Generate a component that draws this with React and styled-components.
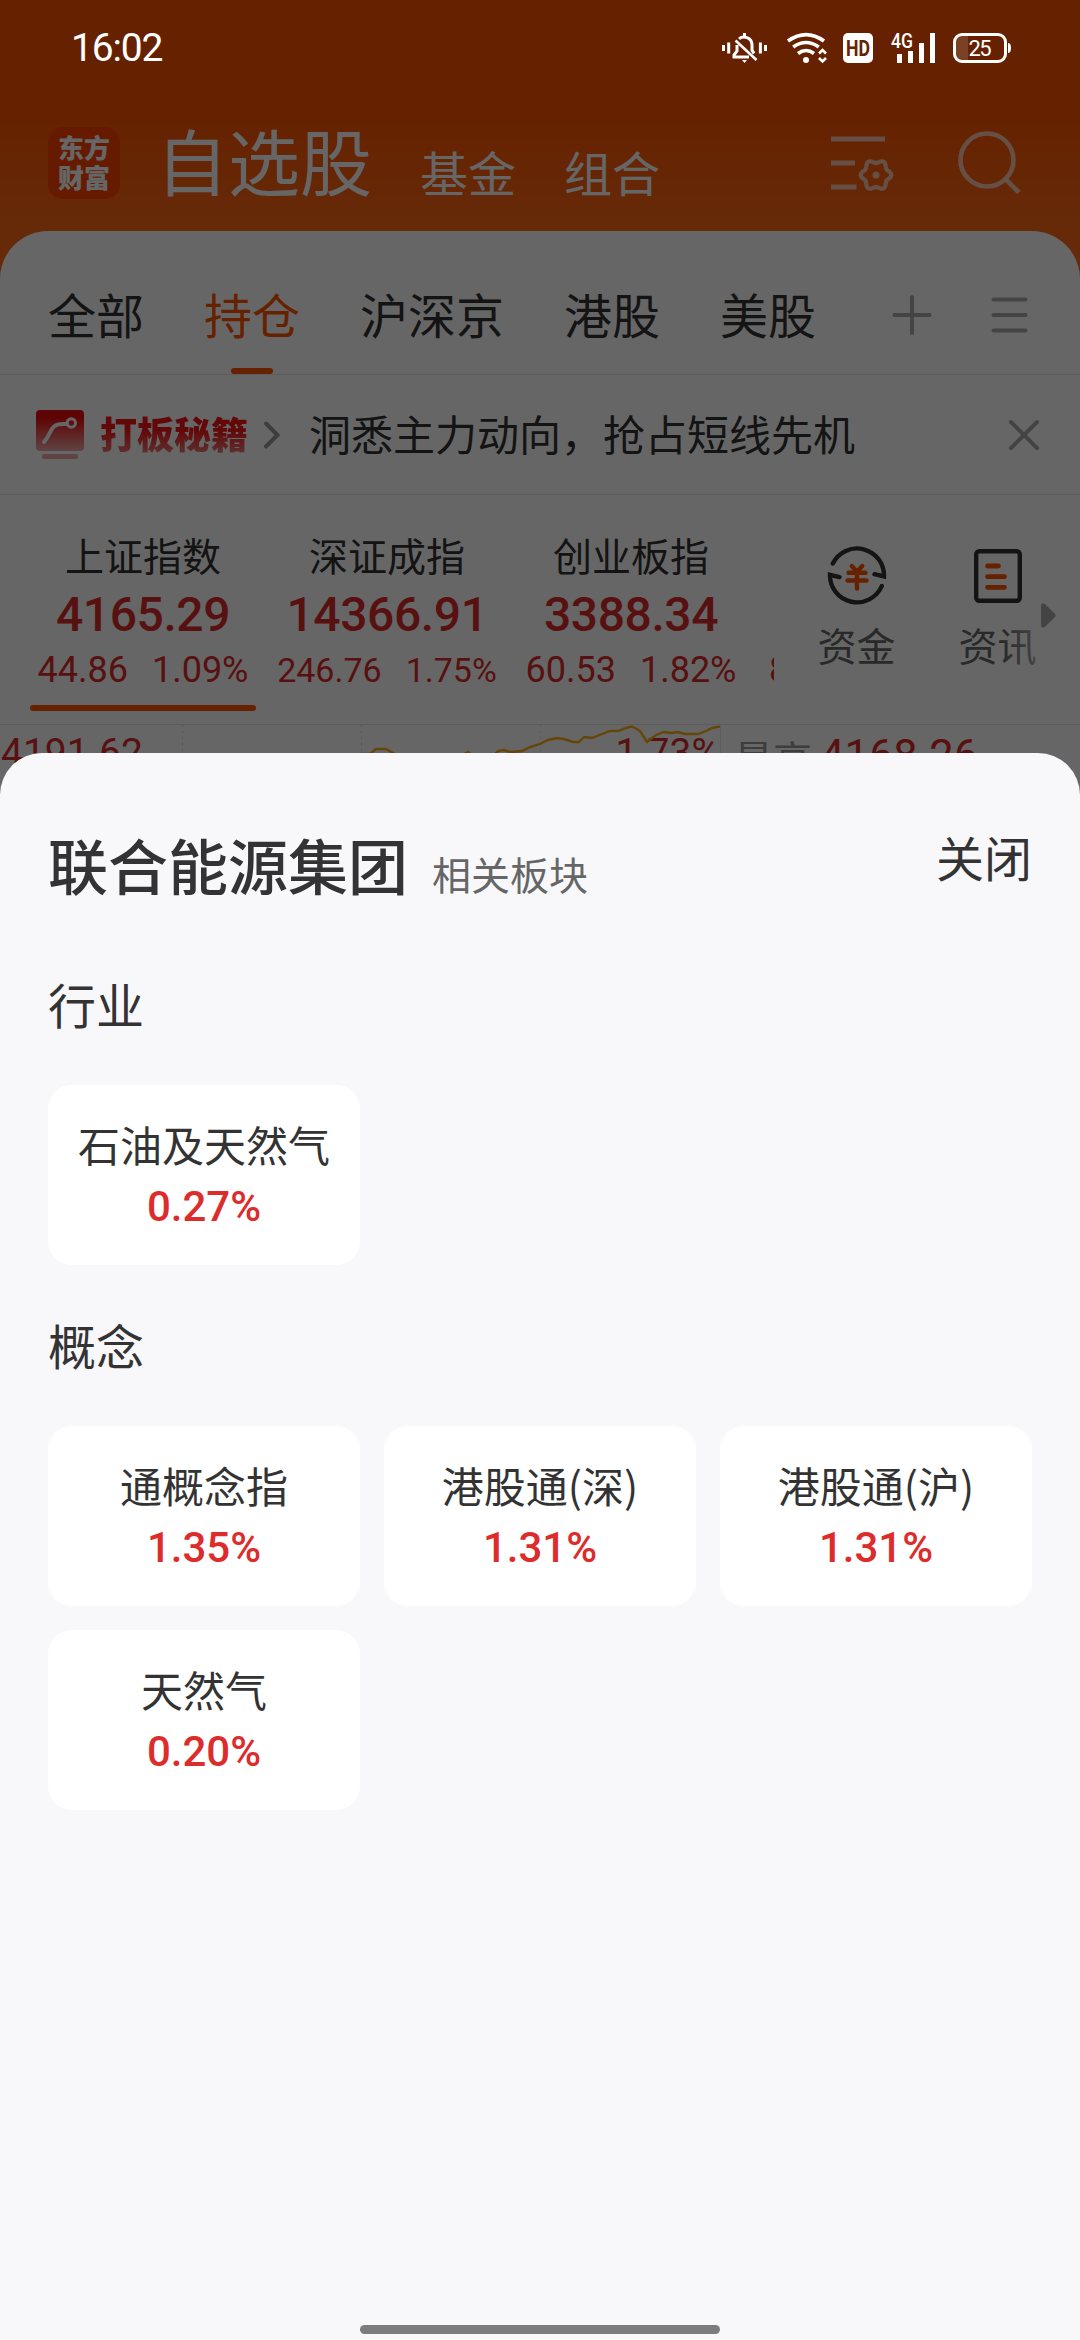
import React from 'react';
import styled, { createGlobalStyle } from 'styled-components';

const GlobalStyle = createGlobalStyle`
  :root {
    --font-cjk: 'Noto Sans CJK SC', 'Noto Sans', sans-serif;
    --font-num: Roboto, 'Liberation Sans', sans-serif;
    --orange: #ff5500;
    --red: #dd2c2c;
    --ink: #333;
    --muted: #666;
    --line: #e8e8e8;
  }

  * {
    box-sizing: border-box;
  }

  body {
    margin: 0;
    font-family: var(--font-cjk);
    color: var(--ink);
  }

  svg {
    display: block;
    flex: none;
  }
`;

const StyledScreen = styled.main`
  position: relative;
  width: 1080px;
  height: 2340px;
  overflow: hidden;
  background-color: #ff6a18;
`;

const StyledStatusBar = styled.div`
  position: absolute;
  top: 0;
  left: 0;
  z-index: 3;
  display: flex;
  align-items: center;
  width: 100%;
  height: 96px;
  padding: 0 69px 0 71px;
  color: #fff;

  .time {
    margin-right: auto;
    font-family: var(--font-num);
    font-size: 39px;
    letter-spacing: -1.2px;
    line-height: 48px;
  }

  .wifi {
    margin-left: 20px;
  }

  .hd {
    margin-left: 16px;
  }

  .signal {
    margin-left: 18px;
  }

  .battery {
    margin-left: 17px;
  }

  svg {
    overflow: visible;
  }

  text {
    font-family: var(--font-num);
  }
`;

const StyledHeader = styled.header`
  display: flex;
  align-items: flex-end;
  height: 231px;
  padding: 0 57px 36px 48px;
  background: linear-gradient(#ff5500 50%, #ff6a18);
  color: #fff;

  .filter {
    margin: 0 57px -4px auto;
  }

  .search {
    margin-bottom: -2px;
  }
`;

const StyledLogo = styled.div`
  width: 72px;
  height: 72px;
  margin: 0 36px -4px 0;
  padding-top: 5px;
  border-radius: 15px;
  background-color: #ff4300;
  font-size: 26px;
  font-weight: 900;
  line-height: 30px;
  text-align: center;
`;

const StyledHeading = styled.span`
  margin-right: 48px;
  font-size: ${props => (props.$active ? 72 : 48)}px;
  line-height: 1;
  white-space: nowrap;
`;

const StyledPanel = styled.section`
  height: 600px;
  border-radius: 48px 48px 0 0;
  background-color: #fff;
`;

const StyledTabs = styled.nav`
  display: flex;
  align-items: center;
  gap: 60px;
  height: 144px;
  padding: 0 52px 0 48px;
  border-bottom: 1px solid var(--line);

  .plus {
    margin: 24px 0 0 15px;
  }

  .menu {
    margin: 24px 0 0 -3px;
  }
`;

const StyledTab = styled.span`
  display: flex;
  flex-direction: column;
  align-items: center;
  height: 143px;
  padding-top: 58px;
  font-size: 48px;
  line-height: 48px;
  white-space: nowrap;
  color: ${props => (props.$active ? 'var(--orange)' : 'var(--ink)')};

  &::after {
    content: '';
    width: 42px;
    height: 6px;
    margin-top: 31px;
    border-radius: 3px;
    background-color: ${props => (props.$active ? 'var(--orange)' : 'transparent')};
  }
`;

const StyledBanner = styled.div`
  display: flex;
  align-items: center;
  height: 120px;
  padding: 0 40px 0 36px;
  border-bottom: 1px solid var(--line);

  .badge {
    margin: -3px 15px 0 16px;
    background: linear-gradient(#f81414 45%, #e88080 92%);
    background-clip: text;
    color: transparent;
    font-size: 37px;
    font-weight: 900;
    line-height: 54px;
  }

  .slogan {
    margin: -4px auto 0 28px;
    font-size: 42px;
    line-height: 54px;
  }
`;

const StyledIndexBar = styled.div`
  display: flex;
  height: 230px;
  border-bottom: 1px solid var(--line);
`;

const StyledIndexList = styled.div`
  display: flex;
  flex: none;
  width: 774px;
  padding-left: 21px;
  overflow: hidden;
`;

const StyledIndex = styled.div`
  display: flex;
  flex: none;
  flex-direction: column;
  align-items: center;
  width: 244px;
  padding-top: 35px;

  .name {
    font-size: 39px;
    line-height: 48px;
  }

  .price {
    margin: 13px 0 11px;
    color: var(--red);
    font-family: var(--font-num);
    font-size: 48px;
    font-weight: 500;
    letter-spacing: -0.4px;
    line-height: 48px;
  }

  .change {
    display: flex;
    gap: 24px;
    color: var(--red);
    font-family: var(--font-num);
    font-size: ${props => (props.$compact ? 34 : 36)}px;
    line-height: 40px;
  }

  &::after {
    content: '';
    width: 226px;
    height: 6px;
    margin-top: 15px;
    border-radius: 3px;
    background-color: ${props => (props.$active ? 'var(--orange)' : 'transparent')};
  }
`;

const StyledNextIndex = styled.div`
  flex: none;
  padding: 155px 0 0 16px;
  color: var(--red);
  font-family: var(--font-num);
  font-size: 36px;
  line-height: 40px;
`;

const StyledShortcuts = styled.div`
  position: relative;
  display: flex;
  padding-left: 12px;

  /* fades the last shortcut out below the scroll arrow */
  &::after {
    content: '';
    position: absolute;
    top: 120px;
    left: 228px;
    width: 45px;
    height: 60px;
    background: linear-gradient(90deg, rgba(255, 255, 255, 0), rgba(255, 255, 255, 0.6));
  }

  .arrow {
    position: absolute;
    top: 108px;
    left: 267px;
    z-index: 1;
  }
`;

const StyledShortcut = styled.div`
  display: flex;
  flex-direction: column;
  align-items: center;
  width: 141px;
  padding-top: 50px;
  color: var(--muted);
  font-size: 39px;
  line-height: 40px;

  svg {
    margin-bottom: 17px;
  }
`;

const StyledQuote = styled.div`
  display: flex;
  height: 60px;
  overflow: hidden;
`;

const StyledChart = styled.div`
  position: relative;
  display: flex;
  justify-content: space-between;
  width: 721px;
  padding: 8px 0 0 1px;
  border-right: 1px solid var(--line);
  color: var(--red);
  font-family: var(--font-num);
  font-size: 39px;
  line-height: 40px;

  svg {
    position: absolute;
    top: 0;
    left: 0;
  }
`;

const StyledHigh = styled.div`
  display: flex;
  gap: 8px;
  padding: 10px 0 0 13px;
  font-size: 39px;
  line-height: 44px;
  color: #999;

  b {
    color: var(--red);
    font-family: var(--font-num);
    font-size: 43.5px;
    font-weight: 400;
  }
`;

const StyledScrim = styled.div`
  position: absolute;
  inset: 0;
  z-index: 1;
  background-color: rgba(0, 0, 0, 0.6);
`;

const StyledSheet = styled.section`
  position: absolute;
  top: 753px;
  right: 0;
  bottom: 0;
  left: 0;
  z-index: 2;
  display: flex;
  flex-direction: column;
  padding: 75px 48px 6px;
  border-radius: 42px 42px 0 0;
  background-color: #f8f8fb;
`;

const StyledSheetHeader = styled.div`
  display: flex;
  align-items: baseline;
  height: 72px;
  margin-bottom: 73px;

  h2 {
    margin: 0 24px 0 0;
    font-size: 60px;
    font-weight: 500;
    line-height: 72px;
  }

  .subtitle {
    color: var(--muted);
    font-size: 39px;
  }

  button {
    align-self: flex-start;
    margin: 4px 0 0 auto;
    padding: 0;
    border: 0;
    background: none;
    color: inherit;
    font: inherit;
    font-size: 48px;
    line-height: 48px;
  }
`;

const StyledSection = styled.div`
  margin-bottom: 49px;

  h3 {
    margin: 0 0 52px;
    font-size: 48px;
    font-weight: 400;
    line-height: 60px;
  }
`;

const StyledGrid = styled.div`
  display: grid;
  grid-template-columns: repeat(3, 312px);
  gap: 24px;
`;

const StyledCard = styled.div`
  display: flex;
  flex-direction: column;
  align-items: center;
  height: 180px;
  padding-top: 31px;
  border-radius: 24px;
  background-color: #fff;

  .name {
    font-size: 42px;
    line-height: 56px;
    white-space: nowrap;
  }

  .change {
    margin-top: 10px;
    color: var(--red);
    font-family: var(--font-num);
    font-size: 42px;
    font-weight: 500;
    line-height: 50px;
  }
`;

const StyledHomeBar = styled.div`
  width: 360px;
  height: 9px;
  margin: auto auto 0;
  border-radius: 5px;
  background-color: #7c7c7c;
`;

const tabs = ['全部', '持仓', '沪深京', '港股', '美股'];

const indices = [
  { name: '上证指数', price: '4165.29', change: '44.86', percent: '1.09%' },
  { name: '深证成指', price: '14366.91', change: '246.76', percent: '1.75%' },
  { name: '创业板指', price: '3388.34', change: '60.53', percent: '1.82%' },
];

const sections = [
  { title: '行业', boards: [{ name: '石油及天然气', change: '0.27%' }] },
  {
    title: '概念',
    boards: [
      { name: '通概念指', change: '1.35%' },
      { name: '港股通(深)', change: '1.31%' },
      { name: '港股通(沪)', change: '1.31%' },
      { name: '天然气', change: '0.20%' },
    ],
  },
];

// six-lobed outline of the settings gear
const gearPoints = Array.from({ length: 72 }, (_, i) => {
  const angle = (i * Math.PI) / 36;
  const r = 13.6 + 1.7 * Math.cos(6 * angle);
  return `${(48 + r * Math.cos(angle)).toFixed(2)},${(44 + r * Math.sin(angle)).toFixed(2)}`;
}).join(' ');

const StatusBar = () => (
  <StyledStatusBar>
    <span className="time">16:02</span>
    <svg width="45" height="30" fill="none" stroke="currentColor" strokeWidth="3">
      <path d="M1.5 12v6M6.7 9.5v11M38.4 9.5v11M43.5 12v6" />
      <path d="M22.5 0v4M17 5.8c4-3.4 13-2 13 6.2v5l2 3.5M15 12v6l-3 4v2h15" />
      <path d="M13.5 7.5L34.5 27" strokeWidth="2.6" />
      <path d="M20 27h5l-2.5 3z" fill="currentColor" stroke="none" />
    </svg>
    <svg className="wifi" width="40" height="30" fill="none" stroke="currentColor" strokeWidth="3.6">
      <path d="M1 8Q19-4.8 37 8M6.2 14Q19 5 31.8 14M11 20.5Q19 14.5 27 20.5" />
      <circle cx="19" cy="27" r="3" fill="currentColor" stroke="none" />
      <path d="M32 20.5l3.500-3.500 3.500 3.500M32 25l3.500 3.500L39 25" strokeWidth="2.6" />
    </svg>
    <svg className="hd" width="30" height="30">
      <rect width="30" height="30" rx="5" fill="currentColor" />
      <text x="3" y="23" textLength="24" lengthAdjust="spacingAndGlyphs" fill="#662200" fontSize="22" fontWeight="700">
        HD
      </text>
    </svg>
    <svg className="signal" width="45" height="30" fill="currentColor">
      <text x="0" y="15" textLength="22" lengthAdjust="spacingAndGlyphs" fontSize="20" fontWeight="500">
        4G
      </text>
      <path d="M6 21h5v9H6zM17 18h5v12h-5zM28 10h5v20h-5zM39 0h5v30h-5z" />
    </svg>
    <svg className="battery" width="58" height="30">
      <rect x="1.5" y="1.5" width="51" height="27" rx="7.5" fill="none" stroke="currentColor" strokeWidth="3" />
      <path d="M15 3H8a5 5 0 0 0-5 5v14a5 5 0 0 0 5 5h7z" fill="currentColor" opacity="0.14" />
      <path d="M55 10q3 0 3 5t-3 5z" fill="currentColor" />
      <text x="15.5" y="23" textLength="23" fill="currentColor" fontSize="22">
        25
      </text>
    </svg>
  </StyledStatusBar>
);

const Header = () => (
  <StyledHeader>
    <StyledLogo>
      东方
      <br />
      财富
    </StyledLogo>
    <StyledHeading $active>自选股</StyledHeading>
    <StyledHeading>基金</StyledHeading>
    <StyledHeading>组合</StyledHeading>
    <svg className="filter" width="70" height="68" fill="none" stroke="#ffd9c8" strokeOpacity="0.85" strokeWidth="5">
      <path d="M3 8h54M3 32h24M3 56h25.5" />
      <polygon points={gearPoints} strokeWidth="4.2" />
      <circle cx="48" cy="44" r="3.5" fill="#ffd9c8" fillOpacity="0.85" stroke="none" />
    </svg>
    <svg className="search" width="68" height="70" fill="none" stroke="#ffd9c8" strokeOpacity="0.85" strokeWidth="4.6">
      <circle cx="32" cy="33" r="26.5" />
      <path d="M50.5 52L64 65.5" />
    </svg>
  </StyledHeader>
);

const Banner = () => (
  <StyledBanner>
    <svg width="48" height="50" fill="none">
      <defs>
        <linearGradient id="trend" x1="0" y1="0" x2="0" y2="1">
          <stop offset="0.2" stopColor="#ee0c0c" />
          <stop offset="1" stopColor="#f0a8a8" />
        </linearGradient>
      </defs>
      <rect width="48" height="41" rx="4" fill="url(#trend)" />
      <path d="M8 32c8-8 5-18 19-18h4" stroke="#fff" strokeWidth="4" strokeLinecap="round" />
      <circle cx="35.3" cy="13" r="4.2" stroke="#fff" strokeWidth="3" />
      <rect x="6" y="44" width="36" height="5" rx="2" fill="#f0a8a8" />
    </svg>
    <span className="badge">打板秘籍</span>
    <svg width="18" height="30" fill="none" stroke="#999" strokeWidth="4" strokeLinecap="round">
      <path d="M3 3.500L14.500 15 3 26.500" />
    </svg>
    <span className="slogan">洞悉主力动向，抢占短线先机</span>
    <svg width="32" height="32" fill="none" stroke="#aaa" strokeWidth="4" strokeLinecap="round">
      <path d="M3 3l26 26M29 3L3 29" />
    </svg>
  </StyledBanner>
);

const Shortcuts = () => (
  <StyledShortcuts>
    <StyledShortcut>
      <svg width="64" height="62" fill="none" stroke="#333" strokeWidth="4.4" strokeLinecap="round">
        <path d="M7.8 18.5A27 27 0 0 1 59 31.5l-9.5-2.3M56.8 41A27 27 0 0 1 5 29.8l9.5 2.3" />
        <path d="M26.8 21l5.2 5.7 5.2-5.7M32 26.7V43.5M23.5 27.7h17M22.5 35.5h19" stroke="#ff5500" />
      </svg>
      资金
    </StyledShortcut>
    <StyledShortcut>
      <svg width="54" height="62" fill="none" stroke="#333" strokeWidth="4.4" strokeLinecap="round">
        <rect x="5.2" y="6.2" width="43.6" height="49.6" rx="3" />
        <path d="M16.5 21h11M16.5 31.7h17M16.5 42.3h17" stroke="#ff5500" strokeWidth="4.8" />
      </svg>
      资讯
    </StyledShortcut>
    <svg className="arrow" width="16" height="25" fill="#aaa">
      <path d="M0 3Q0-1 4 1L13.5 10.5Q15.5 12.5 13.5 14.5L4 24Q0 26 0 22z" />
    </svg>
  </StyledShortcuts>
);

const Quote = () => (
  <StyledQuote>
    <StyledChart>
      <svg width="720" height="60" fill="none">
        <path d="M182.5 0v60M361.5 0v60M540.5 0v60" stroke="#ddd" strokeDasharray="2 4" />
        <polyline
          points="361,29 370,29 376,24 386,24 393,28 402,34 455,34 464,29 468,27 474,31 490,34 498,26 504,25 510,27 522,26 530,22 540,19 548,15 557,13 564,14 573,17 579,17 584,12 592,13 602,9 610,6 618,6 626,3 631,1.5 635,3 640,6 647,17 656,10 664,7 671,8 678,7 685,9 698,9 706,6 712,3 720,1.5"
          stroke="#ffae14"
          strokeWidth="2.4"
        />
      </svg>
      <span>4191.62</span>
      <span>1.73%</span>
    </StyledChart>
    <StyledHigh>
      最高 <b>4168.26</b>
    </StyledHigh>
  </StyledQuote>
);

const App = () => (
  <StyledScreen>
    <GlobalStyle />
    <StatusBar />
    <Header />

    <StyledPanel>
      <StyledTabs>
        {tabs.map(tab => (
          <StyledTab key={tab} $active={tab === '持仓'}>
            {tab}
          </StyledTab>
        ))}
        <svg className="plus" width="42" height="42" fill="none" stroke="#aaa" strokeWidth="4" strokeLinecap="round">
          <path d="M21 3v36M3.5 21h35" />
        </svg>
        <svg className="menu" width="40" height="42" fill="none" stroke="#aaa" strokeWidth="4" strokeLinecap="round">
          <path d="M3.5 5.5h32M3.5 21h32M3.5 36.5h32" />
        </svg>
      </StyledTabs>

      <Banner />

      <StyledIndexBar>
        <StyledIndexList>
          {indices.map((item, i) => (
            <StyledIndex key={item.name} $active={i === 0} $compact={item.change.length > 5}>
              <span className="name">{item.name}</span>
              <span className="price">{item.price}</span>
              <span className="change">
                <span>{item.change}</span>
                <span>{item.percent}</span>
              </span>
            </StyledIndex>
          ))}
          <StyledNextIndex>8</StyledNextIndex>
        </StyledIndexList>
        <Shortcuts />
      </StyledIndexBar>

      <Quote />
    </StyledPanel>

    <StyledScrim />

    <StyledSheet>
      <StyledSheetHeader>
        <h2>联合能源集团</h2>
        <span className="subtitle">相关板块</span>
        <button type="button">关闭</button>
      </StyledSheetHeader>

      {sections.map(section => (
        <StyledSection key={section.title}>
          <h3>{section.title}</h3>
          <StyledGrid>
            {section.boards.map(board => (
              <StyledCard key={board.name}>
                <span className="name">{board.name}</span>
                <span className="change">{board.change}</span>
              </StyledCard>
            ))}
          </StyledGrid>
        </StyledSection>
      ))}

      <StyledHomeBar />
    </StyledSheet>
  </StyledScreen>
);

export default App;
